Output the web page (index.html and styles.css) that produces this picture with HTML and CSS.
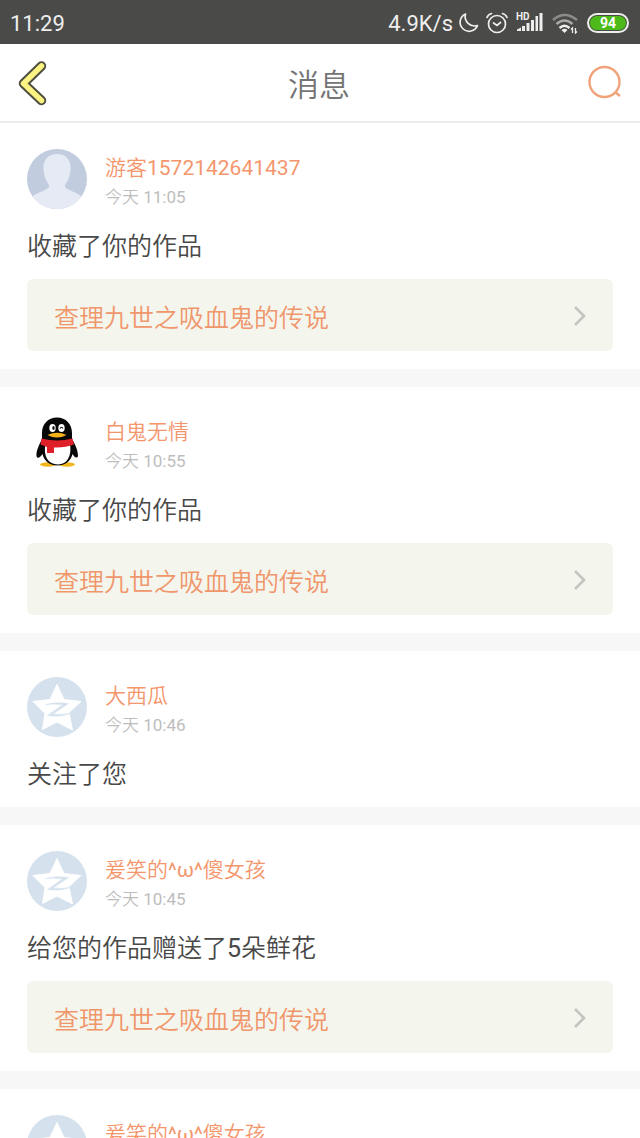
FILE: index.html
```html
<!DOCTYPE html>
<html lang="zh-CN">
<head>
<meta charset="utf-8">
<meta name="viewport" content="width=device-width, initial-scale=1">
<title>消息</title>
<link rel="stylesheet" href="styles.css">
</head>
<body>
<svg class="defs" aria-hidden="true">
  <symbol id="star" viewBox="0 0 60 60">
    <circle cx="30" cy="30" r="30" fill="#d5e2ee"/>
    <path d="M30 7.500L37 22.500L54 24.500L42 35.500L45.500 53L30 45L15.500 52.500L18 36.500L6 24.500L23 22.500Z" fill="#fff" stroke="#fff" stroke-width="1" stroke-linejoin="round"/>
    <path d="M18.500 27.500Q30 24.500 41.500 26.500L26 37Q36 38.500 44.500 36Q34 40.500 20.500 38.500L35.500 28Q27 26.500 18.500 27.500Z" fill="#d5e2ee" stroke="#d5e2ee" stroke-width=".6"/>
  </symbol>
  <symbol id="chevron" viewBox="0 0 14 22">
    <path d="M2 2L11 11L2 20" fill="none" stroke="#c4c5be" stroke-width="2.600"/>
  </symbol>
</svg>
<div class="app">
  <div class="status">
    <span class="clock">11:29</span>
    <div class="indicators">
      <span class="speed">4.9K/s</span>
      <svg class="moon" width="22" height="22" viewBox="0 0 22 22"><path d="M8.500 2A9 9 0 1 0 20.500 13.500A9.500 9.500 0 0 1 8.500 2Z" fill="none" stroke="#eee" stroke-width="1.700" stroke-linejoin="round"/></svg>
      <svg class="alarm" width="22" height="22" viewBox="0 0 22 22"><g fill="none" stroke="#eee" stroke-width="1.700" stroke-linecap="round"><circle cx="11" cy="12" r="8.500"/><path d="M7.500 11L11 13.500L14.500 10.500M1 5.500Q2 2.500 5.500 1.500M21 5.500Q20 2.500 16.500 1.500"/></g></svg>
      <svg class="signal" width="28" height="22" viewBox="0 0 28 22"><text class="hd" x="0" y="8">HD</text><path d="M1 19V17.500L5 15.500V19ZM6 14H9V19H6ZM10.500 11H13.500V19H10.500ZM15 8H18V19H15ZM19.500 4H22V19H19.500ZM23.500 1H26.500V19H23.500Z" fill="#eee"/></svg>
      <svg class="wifi" width="26" height="22" viewBox="0 0 26 22"><g fill="none" stroke-width="2.500"><path d="M1 8Q12.500 -2 25 8" stroke="#8c8c8a"/><path d="M4.500 12Q12.500 5 20.500 12" stroke="#aaa"/><path d="M7.500 16Q12.500 11.500 17.500 16" stroke="#eee"/></g><path d="M9.500 18Q12.500 15.500 15.500 18L12.500 21Z" fill="#eee"/><path d="M20.500 21V16L19 17.500M23.500 16V21L25 19.500" fill="none" stroke="#eee" stroke-width="1.300"/></svg>
      <span class="battery">94</span>
    </div>
  </div>
  <header class="topbar">
    <button class="icon-button" aria-label="返回"><svg width="34" height="46" viewBox="0 0 34 46" fill="none" stroke-linecap="round" stroke-linejoin="round"><path d="M24.500 6L6.500 23.500L24.500 40.500" stroke="#504f40" stroke-width="9.500"/><path d="M24.500 6L6.500 23.500L24.500 40.500" stroke="#fbf382" stroke-width="5.500"/></svg></button>
    <h1>消息</h1>
    <button class="icon-button" aria-label="搜索"><svg width="36" height="36" viewBox="0 0 36 36" fill="none" stroke="#f0a27b" stroke-width="2.400"><circle cx="17.500" cy="17" r="15"/><path d="M28 27L33 31"/></svg></button>
  </header>
  <main class="list">
    <article class="item">
      <div class="user">
        <svg class="avatar" viewBox="0 0 60 60"><clipPath id="round"><circle cx="30" cy="30" r="30"/></clipPath><g clip-path="url(#round)"><path d="M0 0H60V60H0Z" fill="#c1cddf"/><path d="M30 5C39 5 44 11 43.500 20C43 29 40 33 38 36V38C43 43 52 43 57 50V60H3V50C8 43 18 43 22 38V36C20 33 17 29 16.500 20C16 11 21 5 30 5Z" fill="#e5eaf4"/></g></svg>
        <div class="who"><a class="name" href="#">游客1572142641437</a><time class="when">今天 11:05</time></div>
      </div>
      <p class="message">收藏了你的作品</p>
      <a class="work" href="#"><span>查理九世之吸血鬼的传说</span><svg class="chevron"><use href="#chevron"/></svg></a>
    </article>
    <article class="item">
      <div class="user">
        <svg class="avatar" viewBox="0 0 60 60"><ellipse cx="21" cy="51.500" rx="8" ry="2.200" fill="#f2b51c"/><ellipse cx="40" cy="51.500" rx="8" ry="2.200" fill="#f2b51c"/><path d="M30 4.500C39 4.500 45 11 45 20V26C48 31 51 37 51 43C50 46 47 44 45.500 41C44 48 38 52.500 30.500 52.500C23 52.500 17 48 15.500 41C13 45 10 46 9.500 43C9 38 12 32 15 26V20C15 11 21 4.500 30 4.500Z" fill="#080808"/><path d="M18.500 31H43C45 43 40 51.500 31 51.500C21 51.500 16 43 18.500 31Z" fill="#fff"/><ellipse cx="25.500" cy="15" rx="3.200" ry="4" fill="#fff"/><ellipse cx="34.500" cy="15" rx="3.200" ry="4" fill="#fff"/><ellipse cx="26.500" cy="15" rx="1.200" ry="2" fill="#111"/><path d="M33 15.500Q34.500 13 36 15.500" fill="none" stroke="#111" stroke-width="1.200"/><path d="M20.500 22Q30 17.500 39.500 22Q30 27 20.500 22Z" fill="#f5b21b"/><path d="M14.500 25.500Q30 29.500 45.500 25.500L47 31.500Q38 35 27 34.500V40H20V34L13.500 31.500Z" fill="#e02029"/></svg>
        <div class="who"><a class="name" href="#">白鬼无情</a><time class="when">今天 10:55</time></div>
      </div>
      <p class="message">收藏了你的作品</p>
      <a class="work" href="#"><span>查理九世之吸血鬼的传说</span><svg class="chevron"><use href="#chevron"/></svg></a>
    </article>
    <article class="item">
      <div class="user">
        <svg class="avatar"><use href="#star"/></svg>
        <div class="who"><a class="name" href="#">大西瓜</a><time class="when">今天 10:46</time></div>
      </div>
      <p class="message">关注了您</p>
    </article>
    <article class="item">
      <div class="user">
        <svg class="avatar"><use href="#star"/></svg>
        <div class="who"><a class="name" href="#">爰笑的^ω^傻女孩</a><time class="when">今天 10:45</time></div>
      </div>
      <p class="message">给您的作品赠送了5朵鲜花</p>
      <a class="work" href="#"><span>查理九世之吸血鬼的传说</span><svg class="chevron"><use href="#chevron"/></svg></a>
    </article>
    <article class="item">
      <div class="user">
        <svg class="avatar"><use href="#star"/></svg>
        <div class="who"><a class="name" href="#">爰笑的^ω^傻女孩</a></div>
      </div>
    </article>
  </main>
</div>
</body>
</html>
```
FILE: styles.css
```css
* { box-sizing: border-box; }
body { margin: 0; font-family: Roboto, "Noto Sans CJK SC DemiLight", "Noto Sans CJK SC", sans-serif; background: #fff; }
a { color: inherit; text-decoration: none; }
.defs { display: none; }
.app { display: flex; flex-direction: column; height: 100vh; overflow: hidden; }

.status { display: flex; flex: none; justify-content: space-between; align-items: center; height: 44px; padding: 2px 11px 0 10px; background: #4a4a48; color: #eee; font-size: 22px; }
.indicators { display: flex; align-items: center; }
.speed { margin-right: 4px; }
.moon { margin-right: 7px; }
.alarm { margin-right: 8px; }
.signal { margin-right: 8px; }
.wifi { margin-right: 9px; }
.hd { fill: #eee; font-size: 10px; font-weight: 700; }
.battery { width: 42px; height: 20px; border: 2px solid #eee; border-radius: 10px; background: #4cba18; box-shadow: inset 0 0 0 1px #4a4a48; color: #fff; font-size: 14px; font-weight: 700; line-height: 16px; text-align: center; }

.topbar { display: flex; flex: none; justify-content: space-between; align-items: center; height: 79px; padding: 0 17px; border-bottom: 2px solid #ececec; }
.topbar h1 { margin: 0; padding-top: 6px; color: #747474; font-size: 31px; font-weight: 350; line-height: 40px; }
.icon-button { display: flex; padding: 0; border: 0; background: none; cursor: pointer; }

.list { flex: 1; min-height: 0; overflow: hidden; background: #f7f7f7; }
.item { display: flow-root; margin-bottom: 18px; padding: 26px 27px 0; background: #fff; }
.user { display: flex; gap: 18px; height: 60px; }
.avatar { flex: none; width: 60px; height: 60px; }
.who { display: flex; flex-direction: column; padding-top: 4px; }
.name { color: #f4966c; font-size: 21px; line-height: 30px; }
.when { color: #bdbdbd; font-size: 17px; line-height: 28px; }
.message { margin: 20px 0 14px; color: #484848; font-size: 25px; line-height: 36px; }
.work { display: flex; justify-content: space-between; align-items: center; height: 72px; margin-bottom: 18px; padding: 1px 26px 0 27px; border-radius: 6px; background: #f4f5ed; color: #f0966b; font-size: 25px; font-weight: 350; }
.chevron { width: 14px; height: 22px; }
```
